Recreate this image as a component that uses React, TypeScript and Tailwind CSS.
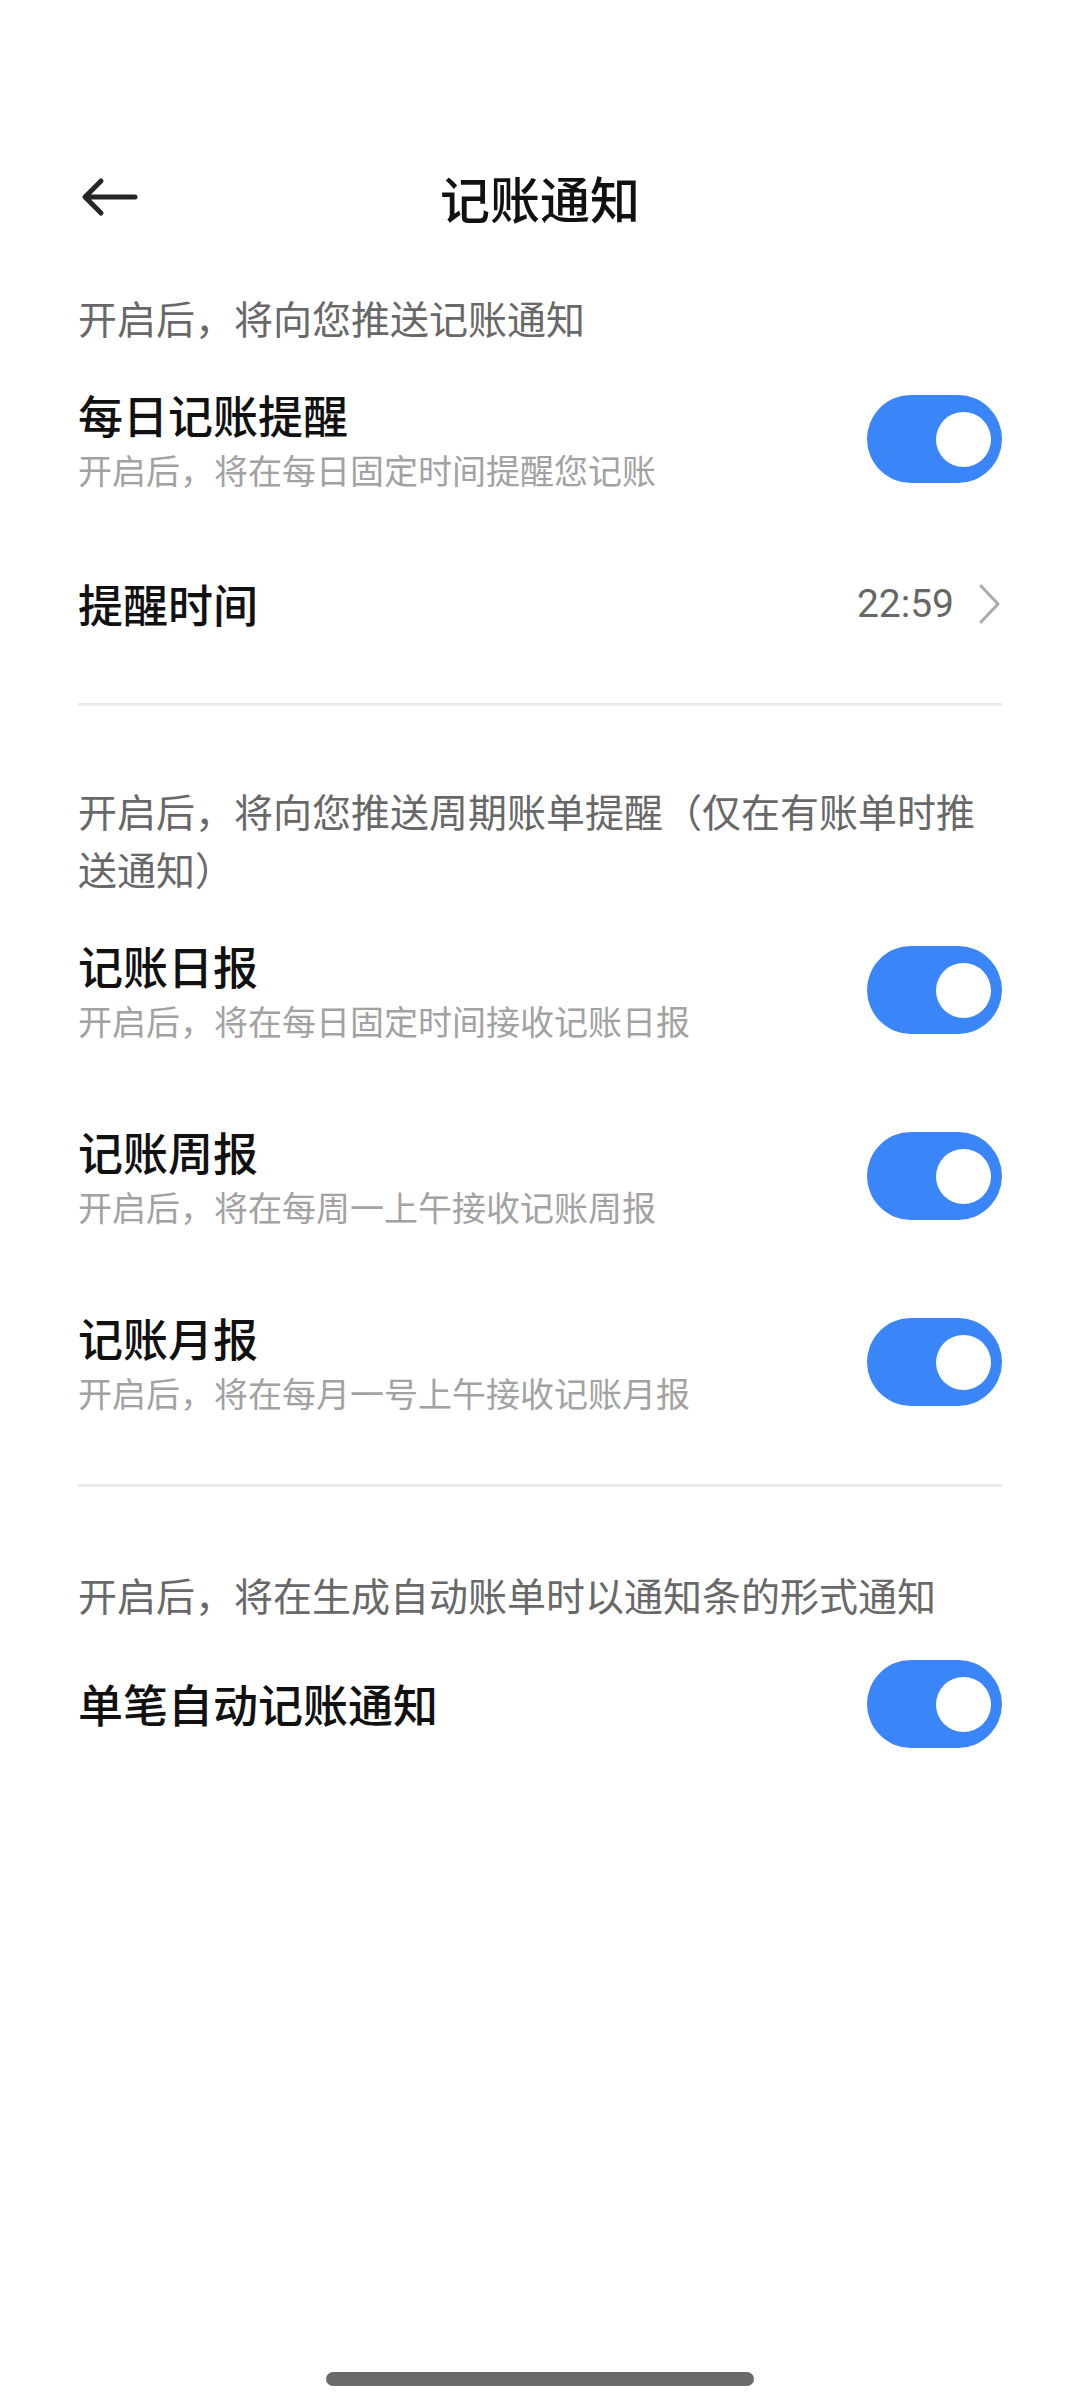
import React from "react";

const FONT = '"Noto Sans CJK SC", "Noto Sans", sans-serif';

function Toggle() {
  return (
    <div className="flex h-[88px] w-[135px] shrink-0 items-center justify-end rounded-full bg-[#3a85f8] pr-[11px]">
      <div className="h-[55px] w-[55px] rounded-full bg-white" />
    </div>
  );
}

function ToggleRow({ title, sub }: { title: string; sub?: string }) {
  return (
    <div className={`flex items-center justify-between ${sub ? "py-[38px]" : "h-[162px]"}`}>
      <div className="flex flex-col">
        <div className="text-[45px] leading-[62px] font-medium text-[#111111]">{title}</div>
        {sub && <div className="text-[34px] leading-[48px] text-[#a2a2a2]">{sub}</div>}
      </div>
      <Toggle />
    </div>
  );
}

function Desc({ children, pt }: { children: React.ReactNode; pt: string }) {
  return <div className={`${pt} text-[39px] leading-[58px] text-[#686868]`}>{children}</div>;
}

function Divider() {
  return <div className="h-[3px] bg-[#ebebeb]" />;
}

export default function App() {
  return (
    <div className="flex h-[2400px] w-[1080px] flex-col bg-white" style={{ fontFamily: FONT }}>
      <div className="h-[137px]" />
      <div className="grid h-[120px] grid-cols-[1fr_auto_1fr] items-center px-[78px]">
        <div className="flex items-center">
          <svg width="60" height="40" viewBox="0 0 60 40" fill="none">
            <path d="M57 20 H8 M23 4 L7 20 L23 36" stroke="#262626" strokeWidth="5" strokeLinecap="round" strokeLinejoin="round" />
          </svg>
        </div>
        <div className="text-[50px] leading-[60px] font-medium text-[#111111]">记账通知</div>
        <div />
      </div>

      <div className="flex flex-col px-[78px]">
        <Desc pt="pt-[31px]">开启后，将向您推送记账通知</Desc>
        <ToggleRow title="每日记账提醒" sub="开启后，将在每日固定时间提醒您记账" />
        <div className="flex h-[144px] items-center justify-between">
          <div className="text-[45px] leading-[62px] font-medium text-[#111111]">提醒时间</div>
          <div className="flex items-center">
            <span className="text-[39px] text-[#666666]" style={{ fontFamily: 'Roboto, "Noto Sans", sans-serif' }}>
              22:59
            </span>
            <svg width="26" height="42" viewBox="0 0 26 42" fill="none" className="ml-[22px]">
              <path d="M5 3 L22 21 L5 39" stroke="#ababab" strokeWidth="3" strokeLinecap="round" strokeLinejoin="round" />
            </svg>
          </div>
        </div>
        <div className="h-[27px]" />
        <Divider />

        <Desc pt="pt-[75px]">开启后，将向您推送周期账单提醒（仅在有账单时推送通知）</Desc>
        <ToggleRow title="记账日报" sub="开启后，将在每日固定时间接收记账日报" />
        <ToggleRow title="记账周报" sub="开启后，将在每周一上午接收记账周报" />
        <ToggleRow title="记账月报" sub="开启后，将在每月一号上午接收记账月报" />
        <div className="h-[29px]" />
        <Divider />

        <Desc pt="pt-[78px]">开启后，将在生成自动账单时以通知条的形式通知</Desc>
        <ToggleRow title="单笔自动记账通知" />
      </div>

      <div className="flex-1" />
      <div className="mb-[14px] flex justify-center">
        <div className="h-[14px] w-[428px] rounded-full bg-[#6a6a6a]" />
      </div>
    </div>
  );
}
